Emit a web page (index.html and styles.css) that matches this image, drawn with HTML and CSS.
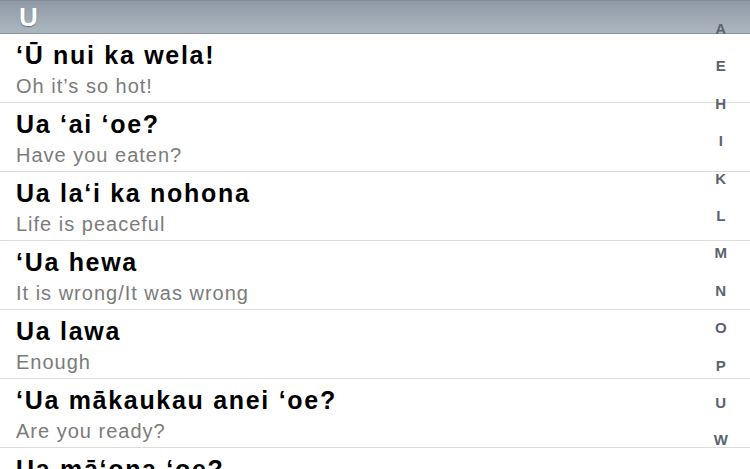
FILE: index.html
```html
<!DOCTYPE html>
<html>
<head>
<meta charset="utf-8">
<link rel="stylesheet" href="styles.css">
</head>
<body>
<div class="screen">
  <div class="section-header">U</div>
  <ul class="list">
    <li class="row"><div class="title">‘Ū nui ka wela!</div><div class="sub">Oh it’s so hot!</div></li>
    <li class="row"><div class="title">Ua ‘ai ‘oe?</div><div class="sub">Have you eaten?</div></li>
    <li class="row"><div class="title">Ua la‘i ka nohona</div><div class="sub">Life is peaceful</div></li>
    <li class="row"><div class="title">‘Ua hewa</div><div class="sub">It is wrong/It was wrong</div></li>
    <li class="row"><div class="title">Ua lawa</div><div class="sub">Enough</div></li>
    <li class="row"><div class="title">‘Ua mākaukau anei ‘oe?</div><div class="sub">Are you ready?</div></li>
    <li class="row"><div class="title">Ua mā‘ona ‘oe?</div><div class="sub">Are you full?</div></li>
  </ul>
  <div class="index">
    <span>A</span><span>E</span><span>H</span><span>I</span><span>K</span><span>L</span>
    <span>M</span><span>N</span><span>O</span><span>P</span><span>U</span><span>W</span>
  </div>
</div>
</body>
</html>
```
FILE: styles.css
```css
html, body {
  margin: 0;
  padding: 0;
  background: #fff;
}
.screen {
  position: relative;
  width: 750px;
  height: 469px;
  overflow: hidden;
  font-family: "Liberation Sans", Arial, sans-serif;
}
.section-header {
  height: 32px;
  border-top: 1px solid #7f8b98;
  border-bottom: 1px solid #89949f;
  background: linear-gradient(#8e99a5, #adb7c1);
  color: #fff;
  font-weight: bold;
  font-size: 26px;
  line-height: 32px;
  padding-left: 19px;
  text-shadow: 0 1px 1px rgba(60, 70, 85, 0.6);
}
.list {
  list-style: none;
  margin: 0;
  padding: 0;
}
.row {
  height: 61px;
  border-bottom: 1px solid #dcdcdc;
  padding: 7px 0 0 16px;
}
.title {
  font-size: 25px;
  font-weight: bold;
  line-height: 28px;
  letter-spacing: 1.7px;
  color: #000;
  white-space: nowrap;
}
.sub {
  margin-top: 3px;
  font-size: 20px;
  line-height: 28px;
  letter-spacing: 1px;
  color: #7b7b7b;
  white-space: nowrap;
}
.index {
  position: absolute;
  top: 20px;
  right: 16px;
  width: 26px;
  display: flex;
  flex-direction: column;
  align-items: center;
}
.index span {
  height: 37.4px;
  font-size: 15px;
  font-weight: bold;
  line-height: 18px;
  letter-spacing: 0.5px;
  color: #5b6370;
}
```
